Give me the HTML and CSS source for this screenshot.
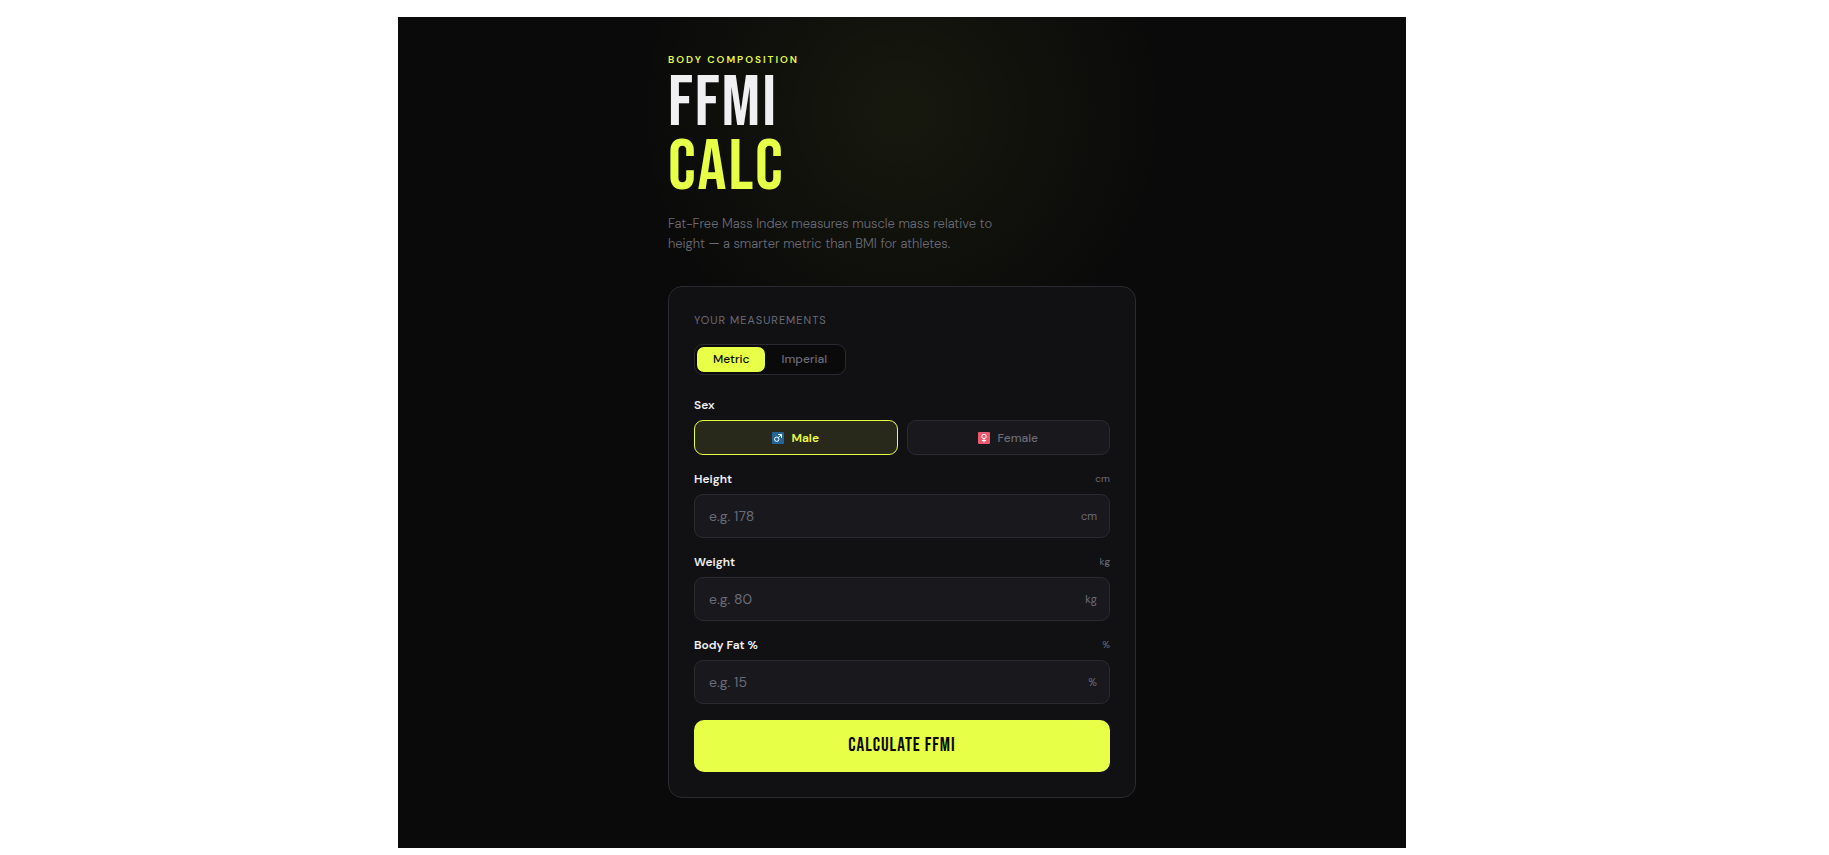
FILE: index.html
```html
<!DOCTYPE html>
<html lang="en">
<head>
  <meta charset="UTF-8" />
  <meta name="viewport" content="width=device-width, initial-scale=1.0"/>
  <title>FFMI Calculator</title>
  <link rel="stylesheet" href="styles.css">
</head>
<body>
  <main class="page">
    <div class="container">
      <header class="header">
        <p class="eyebrow">Body Composition</p>
        <h1>FFMI<br><span class="accent">CALC</span></h1>
        <p class="subtitle">Fat-Free Mass Index measures muscle mass relative to height — a smarter metric than BMI for athletes.</p>
      </header>

      <form class="card">
        <h2 class="card-title">Your Measurements</h2>

        <div class="unit-toggle">
          <button type="button" class="unit-btn active" aria-pressed="true">Metric</button>
          <button type="button" class="unit-btn" aria-pressed="false">Imperial</button>
        </div>

        <div class="field">
          <div class="field-head"><span class="field-label" id="sex-label">Sex</span></div>
          <div class="sex-row" role="group" aria-labelledby="sex-label">
            <button type="button" class="sex-btn active" aria-pressed="true">
              <svg class="sex-icon" viewBox="0 0 12 12" aria-hidden="true">
                <rect width="12" height="12" rx="1" fill="#226699"/>
                <circle cx="4.7" cy="7.2" r="2.2" fill="none" stroke="#fff" stroke-width="1"/>
                <path d="M6.3 5.6 9.2 2.8M6.2 2.5h3.3v3.3" fill="none" stroke="#fff" stroke-width="1"/>
              </svg>
              Male
            </button>
            <button type="button" class="sex-btn" aria-pressed="false">
              <svg class="sex-icon" viewBox="0 0 12 12" aria-hidden="true">
                <rect width="12" height="12" rx="1" fill="#ea596e"/>
                <circle cx="6" cy="4.4" r="2.2" fill="none" stroke="#fff" stroke-width="1"/>
                <path d="M6 6.6v3.8M3.9 8.5h4.2" fill="none" stroke="#fff" stroke-width="1"/>
              </svg>
              Female
            </button>
          </div>
        </div>

        <div class="field">
          <div class="field-head">
            <label class="field-label" for="height">Height</label>
            <span class="field-hint">cm</span>
          </div>
          <div class="input-wrap">
            <input type="text" inputmode="decimal" id="height" placeholder="e.g. 178" />
            <span class="input-unit">cm</span>
          </div>
        </div>

        <div class="field">
          <div class="field-head">
            <label class="field-label" for="weight">Weight</label>
            <span class="field-hint">kg</span>
          </div>
          <div class="input-wrap">
            <input type="text" inputmode="decimal" id="weight" placeholder="e.g. 80" />
            <span class="input-unit">kg</span>
          </div>
        </div>

        <div class="field">
          <div class="field-head">
            <label class="field-label" for="bodyfat">Body Fat %</label>
            <span class="field-hint">%</span>
          </div>
          <div class="input-wrap">
            <input type="text" inputmode="decimal" id="bodyfat" placeholder="e.g. 15" />
            <span class="input-unit">%</span>
          </div>
        </div>

        <button type="button" class="calc-btn">Calculate FFMI</button>
      </form>
    </div>
  </main>
</body>
</html>
```

FILE: styles.css
```css
:root {
  --bg: #0a0a0a;
  --card: #111113;
  --field: #19191d;
  --border: #2a2a30;
  --accent: #e8ff47;
  --text: #f0f0f2;
  --muted: #6b6b78;
  --display: "Bebas Neue", "Liberation Sans Narrow", "Liberation Sans", sans-serif;
}

* {
  box-sizing: border-box;
  margin: 0;
  padding: 0;
}

body {
  padding-right: 25px;
  background: #fff;
  color: var(--text);
  font-family: "DM Sans", Inter, "Liberation Sans", sans-serif;
  font-size: 12px;
  line-height: 16px;
}

button,
input {
  font-family: inherit;
}

button {
  cursor: pointer;
}

.page {
  max-width: 1008px;
  margin: 17px auto 7px;
  padding: 35px 20px 50px;
  background: radial-gradient(circle 265px at 50% 95px, rgba(232, 255, 71, 0.06), transparent) var(--bg);
}

.container {
  max-width: 468px;
  margin: 0 auto;
}

.header {
  margin-bottom: 32px;
}

.eyebrow {
  color: var(--accent);
  font-size: 10px;
  font-weight: 600;
  letter-spacing: 2px;
  text-transform: uppercase;
}

h1 {
  font-family: var(--display);
  font-size: 72px;
  font-weight: 400;
  letter-spacing: 2px;
  line-height: 64px;
  margin: 4px 0 14px;
}

.accent {
  color: var(--accent);
}

.subtitle {
  max-width: 340px;
  color: var(--muted);
  font-size: 13px;
  font-weight: 300;
  line-height: 20px;
}

.card {
  background: var(--card);
  border: 1px solid var(--border);
  border-radius: 14px;
  padding: 25px;
}

.card-title {
  color: var(--muted);
  font-size: 11px;
  font-weight: 400;
  letter-spacing: 1px;
  text-transform: uppercase;
  margin-bottom: 16px;
}

.unit-toggle {
  display: flex;
  width: fit-content;
  background: var(--bg);
  border: 1px solid var(--border);
  border-radius: 9px;
  padding: 2px;
  margin-bottom: 22px;
}

.unit-btn {
  height: 25px;
  padding: 0 16px 1px;
  background: transparent;
  border: none;
  border-radius: 7px;
  color: var(--muted);
  font-size: 12px;
  font-weight: 500;
}

.unit-btn.active {
  background: var(--accent);
  color: #0a0a0a;
}

.field {
  margin-bottom: 16px;
}

.field-head {
  display: flex;
  justify-content: space-between;
  align-items: center;
  margin-bottom: 7px;
}

.field-label {
  font-weight: 600;
}

.field-hint {
  color: var(--muted);
  font-size: 10px;
}

.sex-row {
  display: grid;
  grid-template-columns: 1fr 1fr;
  gap: 9px;
}

.sex-btn {
  display: flex;
  align-items: center;
  justify-content: center;
  gap: 7px;
  height: 35px;
  background: var(--field);
  border: 1px solid var(--border);
  border-radius: 9px;
  color: var(--muted);
  font-size: 12px;
  font-weight: 500;
}

.sex-btn.active {
  background: #29291b;
  border-color: var(--accent);
  color: var(--accent);
  font-weight: 600;
}

.sex-icon {
  width: 12px;
  height: 12px;
}

.input-wrap {
  display: flex;
  align-items: center;
  height: 44px;
  padding: 0 12px 0 14px;
  background: var(--field);
  border: 1px solid var(--border);
  border-radius: 9px;
}

.input-wrap:focus-within {
  border-color: var(--accent);
}

.input-wrap input {
  flex: 1;
  min-width: 0;
  background: transparent;
  border: none;
  outline: none;
  color: var(--text);
  font-size: 14px;
}

.input-wrap input::placeholder {
  color: var(--muted);
}

.input-unit {
  color: var(--muted);
  font-size: 11px;
}

.calc-btn {
  width: 100%;
  height: 52px;
  padding-bottom: 2px;
  background: var(--accent);
  border: none;
  border-radius: 10px;
  color: #0a0a0a;
  font-family: var(--display);
  font-size: 19px;
  font-weight: 400;
  letter-spacing: 1px;
  text-transform: uppercase;
}
```
